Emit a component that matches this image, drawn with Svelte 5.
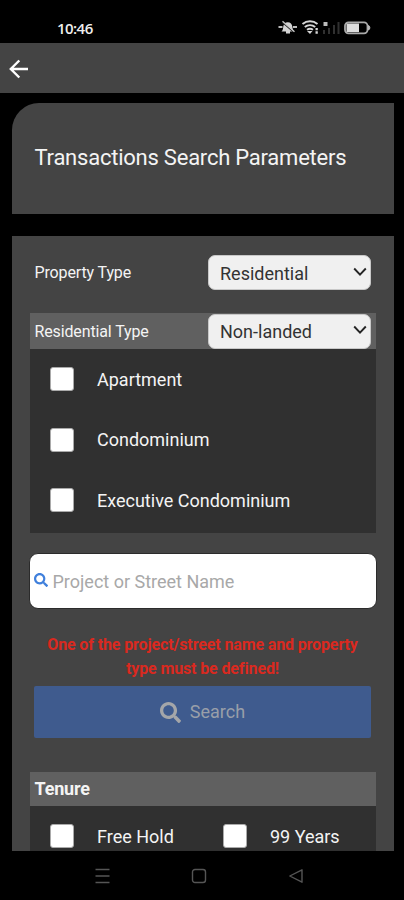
<script>
  const residentialTypes = ['Apartment', 'Condominium', 'Executive Condominium'];
  const tenures = ['Free Hold', '99 Years'];
</script>

{#snippet magnifier()}
  <svg class="magnifier" viewBox="0 0 512 512" fill="currentColor" aria-hidden="true">
    <path d="M505 443 405 343c-4-4-11-7-17-7h-16c28-36 44-80 44-128C416 93 323 0 208 0S0 93 0 208s93 208 208 208c48 0 92-16 128-44v16c0 6 3 13 7 17l100 100c9 9 25 9 34 0l28-28c9-10 9-25 0-34zM208 336c-71 0-128-57-128-128S137 80 208 80s128 57 128 128-57 128-128 128z" />
  </svg>
{/snippet}

{#snippet dropdown(value)}
  <button class="select">
    <span>{value}</span>
    <svg width="14" height="10" viewBox="0 0 14 10"><path d="M1.2 1.5 7 7.6l5.8-6.1" fill="none" stroke="#252525" stroke-width="1.9" /></svg>
  </button>
{/snippet}

{#snippet option(label)}
  <label class="option"><input type="checkbox" /><span>{label}</span></label>
{/snippet}

<div class="phone">
  <div class="status">
    <span class="time">10:46</span>
    <svg class="indicators" width="96" height="18" viewBox="276 18 96 18" aria-hidden="true">
      <path d="M278.500 27h4M293 27h4" stroke="#bbb" stroke-width="2.200" />
      <path d="M281.500 31.500c1.500-1.500 1.500-3 1.700-4.500.3-3 2-4.800 4.600-4.800s4.300 1.800 4.600 4.800c.2 1.500.4 3 1.900 4.500zM286 31h4v2.500h-4z" fill="#d4d4d4" />
      <path d="m282.500 22.500 11 9.500" stroke="#222" stroke-width="1.100" />
      <path d="m282.500 21.300 12 10.500" stroke="#c8c8c8" stroke-width="1.200" />
      <g fill="none" stroke="#d5d5d5" stroke-width="2">
        <path d="M302.500 24c4.500-3.600 10.500-3.600 15 0M304.800 27c3-2.400 7.400-2.400 10.400 0M307 29.800c1.800-1.300 4.200-1.300 6 0" />
      </g>
      <path d="m307 31 3 3 2.500-3zM315.500 28h2.300v2.300h-2.300zM315.500 31.200h2.300v2.500h-2.300z" fill="#d5d5d5" />
      <path d="M323.500 22h4v4h-4z" fill="#bbb" />
      <path d="M323 30h2v4h-2zM328 28h2v6h-2zM333 25h2v9h-2zM337.500 22h2v12h-2z" fill="#303030" />
      <rect x="345" y="22.300" width="22.500" height="11" rx="3.500" fill="none" stroke="#aaa" stroke-width="1.800" />
      <path d="M346.500 23.500H359v8.600h-12.500z" fill="#ddd" />
      <path d="M368.500 25.500c1.800.5 1.800 4 0 4.500z" fill="#bbb" stroke="#bbb" />
    </svg>
  </div>

  <header>
    <svg width="20" height="20" viewBox="0 0 20 20" fill="none" stroke="#fff" stroke-width="2.400"><path d="M19 10H2M10.300 1.500 1.800 10l8.500 8.500" /></svg>
  </header>

  <main>
    <section class="heading"><h1>Transactions Search Parameters</h1></section>

    <section class="form">
      <div class="field"><span class="name">Property Type</span>{@render dropdown('Residential')}</div>

      <div class="group">
        <div class="field bar"><span class="name">Residential Type</span>{@render dropdown('Non-landed')}</div>
        <div class="options">
          {#each residentialTypes as label}{@render option(label)}{/each}
        </div>
      </div>

      <div class="query">
        {@render magnifier()}
        <span>Project or Street Name</span>
      </div>

      <p class="error">One of the project/street name and property<br />type must be defined!</p>

      <button class="submit">{@render magnifier()}<span>Search</span></button>

      <div class="group tenure">
        <div class="bar title">Tenure</div>
        <div class="options pair">
          {#each tenures as label}{@render option(label)}{/each}
        </div>
      </div>
    </section>
  </main>

  <nav>
    <svg width="15" height="16" viewBox="0 0 15 16" fill="none" stroke="#555" stroke-width="1.400"><path d="M.5 1.500h14M.5 8h14M.5 14.500h14" /></svg>
    <svg width="16" height="16" viewBox="0 0 16 16" fill="none" stroke="#555" stroke-width="1.400"><rect x="1.500" y="1.500" width="13" height="13" rx="2.500" /></svg>
    <svg width="16" height="16" viewBox="0 0 16 16" fill="none" stroke="#555" stroke-width="1.400" stroke-linejoin="round"><path d="M14 1.800v12.400L1.800 8z" /></svg>
  </nav>
</div>

<style>
  :global(body) { margin: 0; background: #000; }
  .phone {
    width: 404px; height: 900px; overflow: hidden;
    display: flex; flex-direction: column;
    background: #000; color: #f4f4f4;
    font-family: Roboto, sans-serif;
  }
  .phone * { box-sizing: border-box; }
  svg { display: block; flex: none; }
  .status { height: 43px; flex: none; display: flex; justify-content: space-between; padding: 18px 32px 0 57px; }
  .time { font: 600 15px/20px "Open Sans", sans-serif; letter-spacing: -.55px; color: #eee; }
  header { height: 50px; flex: none; padding: 16px 0 0 9px; background: #444; }
  main { height: 758px; flex: none; overflow: hidden; padding: 10px 10px 0 11.5px; }
  .heading { height: 111px; padding: 40px 0 0 23px; background: #444; border-top-left-radius: 27px; }
  h1 { margin: 0; font-size: 22px; line-height: 30px; font-weight: 400; letter-spacing: -.23px; white-space: nowrap; }
  .form { height: 640px; margin-top: 22px; padding: 18.500px 18.500px 0 18px; background: #444; }
  .field { display: flex; align-items: center; justify-content: space-between; height: 36px; padding: 0 4.500px 0 5px; }
  .name { font-size: 16px; letter-spacing: -.13px; }
  .select {
    width: 163px; height: 35px; padding: 0 3px 0 11px;
    display: flex; align-items: center; justify-content: space-between;
    border: 1px solid #c8c8c8; border-radius: 7px; background: #f0f0f0;
    color: #333; font: 400 18px/24px Roboto, sans-serif;
  }
  .select span { padding-top: 2px; }
  .select svg { margin-bottom: 2px; }
  .group { margin-top: 22.500px; background: #303030; }
  .bar { background: #606060; }
  .options { height: 183.500px; padding: 0 0 0 20.500px; }
  .option { display: flex; align-items: center; gap: 23px; height: 60.500px; font-size: 18px; white-space: nowrap; }
  input { appearance: none; width: 24px; height: 24px; margin: 0; border: 1px solid #aaa; border-radius: 3px; background: #fff; flex: none; }
  .query {
    display: flex; align-items: center; height: 56px; margin: 20.500px -1px 0; padding-left: 4px;
    border: 1px solid #2b2b2b; border-radius: 9px; background: #fff;
    color: #a8a8a8; font-size: 18px;
  }
  .query .magnifier { width: 14px; height: 14px; margin: 0 5px 2px 0; color: #4080dc; }
  .error { margin: 24px 0 0; text-align: center; color: #da291f; font-size: 16px; line-height: 24px; font-weight: 700; letter-spacing: -.13px; white-space: nowrap; }
  .submit {
    display: flex; align-items: center; justify-content: center; gap: 9px;
    width: 337px; height: 52px; margin: 5px 0 0 4.500px; padding: 0;
    border: 0; border-radius: 2px; background: #3f5b8e;
    color: #999fa9; font: 400 18px/24px Roboto, sans-serif;
  }
  .submit .magnifier { width: 21px; height: 21px; color: #a4a6a9; }
  .tenure { margin-top: 34px; }
  .title { height: 34px; padding-left: 5px; font-size: 18px; line-height: 34px; font-weight: 700; letter-spacing: -.2px; }
  .pair { display: flex; }
  .pair .option { width: 173px; flex: none; }
  .pair .option:last-child { width: 152px; }
  nav { height: 49px; flex: none; display: flex; gap: 81px; padding: 17px 0 0 95px; }
</style>
